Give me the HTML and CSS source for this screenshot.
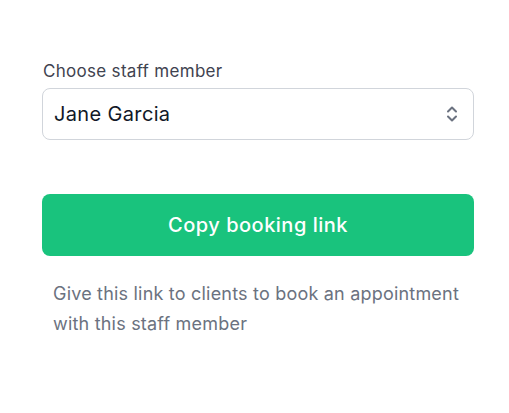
FILE: index.html
```html
<!DOCTYPE html>
<html>
<head>
<meta charset="utf-8">
<link rel="stylesheet" href="styles.css">
</head>
<body>
<div class="panel">
  <label class="label">Choose staff member</label>
  <div class="select">
    <span class="value">Jane Garcia</span>
    <svg class="chev" width="14" height="20" viewBox="0 0 14 20" fill="none" stroke="#6b7280" stroke-width="2" stroke-linecap="round" stroke-linejoin="round">
      <path d="M3 7.5 L7 3.5 L11 7.5"/>
      <path d="M3 12.5 L7 16.5 L11 12.5"/>
    </svg>
  </div>
  <button class="btn">Copy booking link</button>
  <p class="help">Give this link to clients to book an appointment with this staff member</p>
</div>
</body>
</html>
```
FILE: styles.css
```css
html, body {
  margin: 0;
  padding: 0;
  background: #ffffff;
}
body {
  font-family: Inter, "Noto Sans", sans-serif;
}
.panel {
  width: 432px;
  margin-left: 42px;
  padding-top: 59px;
  display: flex;
  flex-direction: column;
}
.label {
  font-size: 17px;
  letter-spacing: 0.3px;
  line-height: 24px;
  color: #3f4350;
  margin-bottom: 5px;
  padding-left: 1px;
}
.select {
  height: 52px;
  box-sizing: border-box;
  border: 1px solid #d1d5db;
  border-radius: 8px;
  display: flex;
  align-items: center;
  justify-content: space-between;
  padding: 0 14px 0 11px;
}
.value {
  font-size: 20px;
  letter-spacing: 0.35px;
  color: #111827;
}
.chev {
  display: block;
}
.btn {
  margin-top: 54px;
  height: 62px;
  border: none;
  border-radius: 8px;
  background: #19c37d;
  color: #ffffff;
  font-family: Inter, "Noto Sans", sans-serif;
  font-size: 20px;
  letter-spacing: 0.5px;
  font-weight: 500;
  padding: 0;
}
.help {
  margin: 23px 0 0 0;
  padding: 0 10px 0 11px;
  font-size: 18px;
  letter-spacing: 0.2px;
  line-height: 30px;
  color: #6b7280;
}
```
